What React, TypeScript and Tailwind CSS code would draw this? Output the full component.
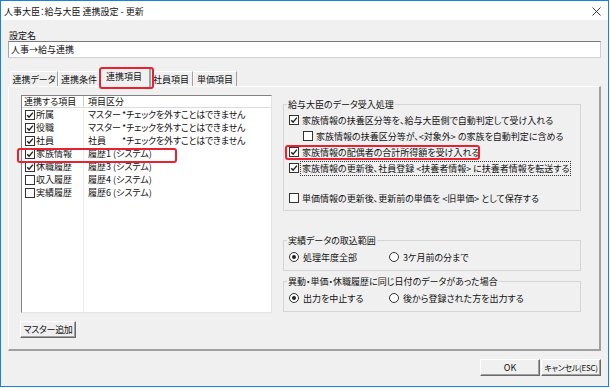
import React from 'react';

const Check = ({ checked }: { checked?: boolean }) => (
  <span className="w-[10px] h-[10px] shrink-0 border border-[#333] bg-white flex items-center justify-center">
    {checked && (
      <svg width="8" height="8" viewBox="0 0 8 8">
        <path d="M1.2 4.2 L3.1 6.1 L6.9 1.6" stroke="#222" strokeWidth="1.4" fill="none" />
      </svg>
    )}
  </span>
);

const Radio = ({ checked }: { checked?: boolean }) => (
  <span className="w-[10px] h-[10px] shrink-0 rounded-full border border-[#333] bg-white flex items-center justify-center">
    {checked && <span className="w-[4px] h-[4px] rounded-full bg-[#222]" />}
  </span>
);

const Button = ({ label, className = '' }: { label: string; className?: string }) => (
  <div
    className={`h-[17px] flex items-center justify-center bg-[#f0f0f0] border border-t-white border-l-white border-r-[#696969] border-b-[#696969] shadow-[inset_-1px_-1px_0_#a0a0a0] ${className}`}
  >
    {label}
  </div>
);

const GroupBox = ({ title, className = '', children }: { title: string; className?: string; children: React.ReactNode }) => (
  <div className={`relative border border-[#d5d5d5] pl-[5px] ${className}`}>
    <span className="absolute left-[3px] top-[-6px] px-[1px] bg-[#f0f0f0] leading-[11px]">{title}</span>
    {children}
  </div>
);

const items = [
  { name: '所属', checked: true, kind: 'マスター', note: '*チェックを外すことはできません' },
  { name: '役職', checked: true, kind: 'マスター', note: '*チェックを外すことはできません' },
  { name: '社員', checked: true, kind: '社員', note: '*チェックを外すことはできません' },
  { name: '家族情報', checked: true, kind: '履歴1 (システム)' },
  { name: '休職履歴', checked: true, kind: '履歴3 (システム)' },
  { name: '収入履歴', checked: false, kind: '履歴4 (システム)' },
  { name: '実績履歴', checked: false, kind: '履歴6 (システム)' },
];

const tabs = [
  { label: '連携データ', w: 'w-[48px]' },
  { label: '連携条件', w: 'w-[42px]' },
  { label: '連携項目', w: 'w-[53px]', active: true },
  { label: '社員項目', w: 'w-[44px]' },
  { label: '単価項目', w: 'w-[44px]' },
];

export default function App() {
  return (
    <div className="w-[610px] h-[388px] bg-white font-['Noto_Sans_CJK_JP',sans-serif] [font-feature-settings:'palt'] text-[9px] leading-none text-[#111] whitespace-nowrap">
      <div className="w-[609px] h-[387px] border border-[#1883d7] flex flex-col">
        {/* title bar */}
        <div className="h-[19px] bg-white flex items-center justify-between pl-[3px] pr-[7px] pt-[2px]">
          <span>人事大臣：給与大臣 連携設定 - 更新</span>
          <svg width="9" height="9" viewBox="0 0 9 9">
            <path d="M0.5 0.5 L8.5 8.5 M8.5 0.5 L0.5 8.5" stroke="#222" strokeWidth="0.9" />
          </svg>
        </div>

        <div className="flex-1 bg-[#f0f0f0] px-[7px] flex flex-col">
          <div className="pt-[9px] h-[21px] flex items-center pl-[1px]">設定名</div>
          <div className="h-[17px] bg-white border border-[#d0d0d0] border-t-[#7a7a7a] border-l-[#a8a8a8] flex items-center pl-[2px]">
            人事→給与連携
          </div>

          {/* tabs */}
          <div className="relative mt-[9px] h-[19px] flex items-end pl-[2px]">
            {tabs.map((t) =>
              t.active ? (
                <div
                  key={t.label}
                  className={`relative z-10 ${t.w} -mx-[2px] h-[20px] -mb-[1px] bg-[#f0f0f0] border-t border-l border-white border-r-2 border-r-[#a0a0a0] flex items-center justify-center pb-[2px]`}
                >
                  {t.label}
                </div>
              ) : (
                <div
                  key={t.label}
                  className={`${t.w} h-[15px] bg-[#f0f0f0] border-t border-l border-white border-r border-r-[#a0a0a0] flex items-center justify-center`}
                >
                  {t.label}
                </div>
              )
            )}
            <div className="absolute z-20 left-[91px] top-0 w-[55px] h-[22px] rounded-[3px] border-2 border-[#e8232f]" />
          </div>

          {/* tab page */}
          <div className="h-[265px] border-t border-l border-white border-r-2 border-b-2 border-r-[#a0a0a0] border-b-[#a0a0a0] pt-[8px] pl-[12px] flex">
            <div className="relative w-[251px] flex flex-col">
              <div className="h-[218px] bg-white border border-t-[#828282] border-l-[#828282] border-r-[#e3e3e3] border-b-[#e3e3e3] flex flex-col">
                <div className="h-[12px] flex border-b border-[#dcdcdc]">
                  <div className="w-[62px] shrink-0 border-r border-[#cfcfcf] pl-[2px] flex items-center">連携する項目</div>
                  <div className="pl-[4px] flex items-center">項目区分</div>
                </div>
                {items.map((it) => (
                  <div key={it.name} className="h-[13px] flex">
                    <div className="w-[62px] shrink-0 border-r border-[#ececec] pl-[3px] flex items-center gap-[1px]">
                      <Check checked={it.checked} />
                      <span>{it.name}</span>
                    </div>
                    <div className="pl-[4px] flex items-center">
                      {it.note ? (
                        <>
                          <span className="w-[34px] shrink-0">{it.kind}</span>
                          <span className="tracking-[-0.2px]">{it.note}</span>
                        </>
                      ) : (
                        <span>{it.kind}</span>
                      )}
                    </div>
                  </div>
                ))}
                <div className="flex-1 flex">
                  <div className="w-[62px] border-r border-[#ececec]" />
                </div>
              </div>
              <Button label="マスター追加" className="mt-[8px] w-[56px] -ml-[1px] tracking-[-0.3px]" />
              <div className="absolute left-[-4px] top-[53px] w-[160px] h-[15px] rounded-[3px] border-2 border-[#e8232f]" />
            </div>

            <div className="ml-[11px] w-[298px] flex flex-col">
              <GroupBox title="給与大臣のデータ受入処理" className="mt-[9px] h-[107px] pt-[7px]">
                <div className="h-[16px] flex items-center gap-[3px]">
                  <Check checked />
                  <span>家族情報の扶養区分等を、給与大臣側で自動判定して受け入れる</span>
                </div>
                <div className="h-[16px] flex items-center gap-[3px] pl-[14px]">
                  <Check />
                  <span>家族情報の扶養区分等が、&lt;対象外&gt; の家族を自動判定に含める</span>
                </div>
                <div className="h-[16px] flex items-center gap-[3px]">
                  <Check checked />
                  <span>家族情報の配偶者の合計所得額を受け入れる</span>
                </div>
                <div className="h-[16px] flex items-center gap-[1px]">
                  <Check checked />
                  <span className="h-[15px] flex items-center px-[1px] border border-dotted border-[#333]">
                    家族情報の更新後、社員登録 &lt;扶養者情報&gt; に扶養者情報を転送する
                  </span>
                </div>
                <div className="mt-[14px] h-[16px] flex items-center gap-[3px]">
                  <Check />
                  <span>単価情報の更新後、更新前の単価を &lt;旧単価&gt; として保存する</span>
                </div>
                <div className="absolute left-[1px] top-[40px] w-[195px] h-[15px] rounded-[3px] border-2 border-[#e8232f]" />
              </GroupBox>

              <GroupBox title="実績データの取込範囲" className="mt-[29px] h-[31px] pt-[8px]">
                <div className="h-[16px] flex items-center">
                  <div className="w-[100px] flex items-center gap-[4px]">
                    <Radio checked />
                    <span>処理年度全部</span>
                  </div>
                  <div className="flex items-center gap-[4px]">
                    <Radio />
                    <span>3ケ月前の分まで</span>
                  </div>
                </div>
              </GroupBox>

              <GroupBox title="異動・単価・休職履歴に同じ日付のデータがあった場合" className="mt-[10px] h-[31px] pt-[8px]">
                <div className="h-[16px] flex items-center">
                  <div className="w-[100px] flex items-center gap-[4px]">
                    <Radio checked />
                    <span>出力を中止する</span>
                  </div>
                  <div className="flex items-center gap-[4px]">
                    <Radio />
                    <span>後から登録された方を出力する</span>
                  </div>
                </div>
              </GroupBox>
            </div>
          </div>

          <div className="mt-[8px] flex justify-end gap-[1px]">
            <Button label="OK" className="w-[60px]" />
            <Button label="キャンセル(ESC)" className="w-[60px] text-[8px] tracking-[-0.3px]" />
          </div>
        </div>
      </div>
    </div>
  );
}
